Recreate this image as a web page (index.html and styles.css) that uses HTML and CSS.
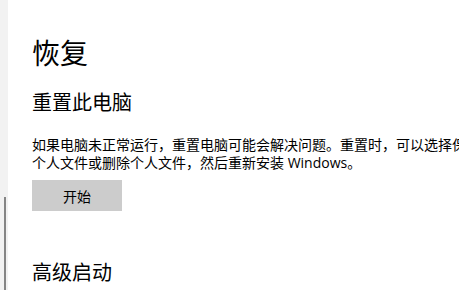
FILE: index.html
```html
<!DOCTYPE html>
<html lang="zh-CN">
<head>
<meta charset="utf-8">
<title>恢复</title>
<link rel="stylesheet" href="styles.css">
</head>
<body>
<div class="window">
  <div class="rail"><div class="thumb"></div></div>
  <main class="content">
    <h1 class="page-title">恢复</h1>
    <h2 class="section-title">重置此电脑</h2>
    <p class="desc">如果电脑未正常运行，重置电脑可能会解决问题。重置时，可以选择保留<br>个人文件或删除个人文件，然后重新安装 Windows。</p>
    <button class="btn">开始</button>
    <h2 class="section-title advanced">高级启动</h2>
  </main>
</div>
</body>
</html>
```
FILE: styles.css
```css
html, body {
  margin: 0;
  padding: 0;
  background: #ffffff;
  overflow: hidden;
}
body {
  font-family: "Segoe UI", "Noto Sans", "Noto Sans CJK SC", sans-serif;
  color: #000;
}
.window {
  display: flex;
  width: 459px;
  height: 290px;
  overflow: hidden;
}
.rail {
  flex: 0 0 8px;
  background: #f2f2f2;
  padding-top: 197px;
  box-sizing: border-box;
}
.thumb {
  width: 2px;
  height: 100px;
  margin-left: 4px;
  background: #858585;
}
.content {
  flex: 1;
  padding: 32px 0 0 24px;
  min-width: 0;
}
.page-title {
  margin: 0;
  font-family: "Noto Sans CJK SC", sans-serif;
  font-weight: 400;
  font-size: 28px;
  line-height: 40px;
}
.section-title {
  margin: 16px 0 0;
  font-family: "Noto Sans CJK SC", sans-serif;
  font-weight: 400;
  font-size: 20px;
  line-height: 28px;
}
.desc {
  margin: 20px 0 0;
  font-size: 14px;
  line-height: 18px;
  white-space: nowrap;
  font-family: "Segoe UI", "Open Sans", "Noto Sans CJK SC", sans-serif;
}
.btn {
  display: block;
  margin-top: 8px;
  width: 90px;
  height: 31px;
  border: none;
  background: #cccccc;
  font-family: "Noto Sans CJK SC", sans-serif;
  font-size: 14px;
  color: #000;
  padding: 0;
}
.advanced {
  margin-top: 47px;
}
```
